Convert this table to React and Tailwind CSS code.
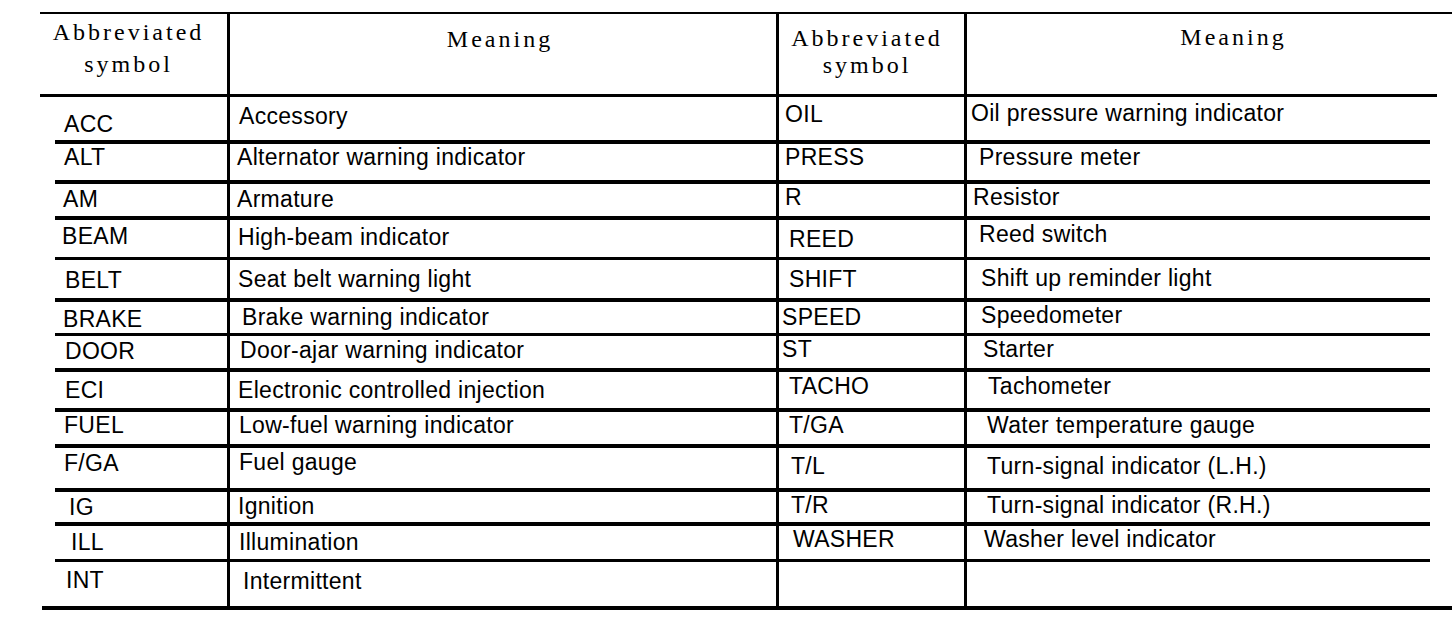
import React from "react";

// abbreviation table, two pairs of columns side by side
const rows = [
  { h: "h-[47px]", bar: "h-[4px]", cells: [["ACC", "pl-[24px] pt-[14px]"], ["Accessory", "pl-[9px] pt-[6px]"], ["OIL", "pl-[6px] pt-[4px]"], ["Oil pressure warning indicator", "pl-[4px] pt-[3px]"]] },
  { h: "h-[40px]", bar: "h-[4px]", cells: [["ALT", "pl-[24px] pt-[0px]"], ["Alternator warning indicator", "pl-[7px] pt-[0px]"], ["PRESS", "pl-[6px] pt-[0px]"], ["Pressure meter", "pl-[12px] pt-[0px]"]] },
  { h: "h-[36px]", bar: "h-[4px]", cells: [["AM", "pl-[23px] pt-[2px]"], ["Armature", "pl-[7px] pt-[2px]"], ["R", "pl-[6px] pt-[0px]"], ["Resistor", "pl-[6px] pt-[0px]"]] },
  { h: "h-[40px]", bar: "h-[3px]", cells: [["BEAM", "pl-[22px] pt-[3px]"], ["High-beam indicator", "pl-[8px] pt-[4px]"], ["REED", "pl-[10px] pt-[6px]"], ["Reed switch", "pl-[12px] pt-[1px]"]] },
  { h: "h-[42px]", bar: "h-[4px]", cells: [["BELT", "pl-[25px] pt-[7px]"], ["Seat belt warning light", "pl-[8px] pt-[6px]"], ["SHIFT", "pl-[10px] pt-[6px]"], ["Shift up reminder light", "pl-[14px] pt-[5px]"]] },
  { h: "h-[34px]", bar: "h-[3px]", cells: [["BRAKE", "pl-[23px] pt-[4px]"], ["Brake warning indicator", "pl-[12px] pt-[2px]"], ["SPEED", "pl-[3px] pt-[2px]"], ["Speedometer", "pl-[14px] pt-[0px]"]] },
  { h: "h-[36px]", bar: "h-[4px]", cells: [["DOOR", "pl-[25px] pt-[2px]"], ["Door-ajar warning indicator", "pl-[10px] pt-[1px]"], ["ST", "pl-[3px] pt-[0px]"], ["Starter", "pl-[16px] pt-[0px]"]] },
  { h: "h-[40px]", bar: "h-[4px]", cells: [["ECI", "pl-[25px] pt-[5px]"], ["Electronic controlled injection", "pl-[8px] pt-[5px]"], ["TACHO", "pl-[10px] pt-[1px]"], ["Tachometer", "pl-[21px] pt-[1px]"]] },
  { h: "h-[36px]", bar: "h-[4px]", cells: [["FUEL", "pl-[24px] pt-[0px]"], ["Low-fuel warning indicator", "pl-[9px] pt-[0px]"], ["T/GA", "pl-[10px] pt-[0px]"], ["Water temperature gauge", "pl-[20px] pt-[0px]"]] },
  { h: "h-[44px]", bar: "h-[4px]", cells: [["F/GA", "pl-[24px] pt-[2px]"], ["Fuel gauge", "pl-[9px] pt-[1px]"], ["T/L", "pl-[12px] pt-[5px]"], ["Turn-signal indicator (L.H.)", "pl-[20px] pt-[5px]"]] },
  { h: "h-[34px]", bar: "h-[4px]", cells: [["IG", "pl-[29px] pt-[2px]"], ["Ignition", "pl-[8px] pt-[1px]"], ["T/R", "pl-[12px] pt-[0px]"], ["Turn-signal indicator (R.H.)", "pl-[20px] pt-[0px]"]] },
  { h: "h-[36px]", bar: "h-[3px]", cells: [["ILL", "pl-[31px] pt-[3px]"], ["Illumination", "pl-[9px] pt-[3px]"], ["WASHER", "pl-[14px] pt-[0px]"], ["Washer level indicator", "pl-[17px] pt-[0px]"]] },
  { h: "h-[48px]", bar: "h-[4px]", cells: [["INT", "pl-[26px] pt-[5px]"], ["Intermittent", "pl-[13px] pt-[6px]"], ["", ""], ["", ""]] },
];

const bodyEdges = ["ml-[15px]", "", "", "mr-[22px]"];
const lastEdges = ["ml-[2px]", "", "", ""];

function HeaderRow() {
  const cells = [
    ["pt-[2px] pr-[10px] leading-[32px]", <>Abbreviated<br />symbol</>],
    ["pt-[11px] pr-[6px] leading-[28px]", "Meaning"],
    ["pt-[11px] pr-[9px] leading-[27px]", <>Abbreviated<br />symbol</>],
    ["pt-[9px] pl-[48px] leading-[28px]", "Meaning"],
  ];
  const edges = ["", "", "", "mr-[15px]"];
  return (
    <div className="grid grid-cols-[187px_549px_188px_488px] h-[83px]">
      {cells.map(([cls, text], i) => (
        <div key={i} className={i > 0 ? "flex flex-col border-l-[3px] border-black" : "flex flex-col"}>
          <div className={`flex-1 text-center font-['Liberation_Serif',serif] text-[24px] tracking-[3px] ${cls}`}>{text}</div>
          <div className={`h-[3px] bg-black ${edges[i]}`} />
        </div>
      ))}
    </div>
  );
}

function Row({ row, last }) {
  const edges = last ? lastEdges : bodyEdges;
  return (
    <div className={`grid grid-cols-[187px_549px_188px_488px] ${row.h}`}>
      {row.cells.map(([text, cls], i) => (
        <div key={i} className={i > 0 ? "flex flex-col border-l-[3px] border-black" : "flex flex-col"}>
          <div className={`flex-1 whitespace-nowrap text-[23px] leading-[26px] tracking-[0.3px] ${cls}`}>{text}</div>
          <div className={`${row.bar} bg-black ${edges[i]}`} />
        </div>
      ))}
    </div>
  );
}

export default function App() {
  return (
    <div className="min-h-screen bg-white pl-[40px] pt-[12px] text-black font-['Liberation_Sans',Arial,sans-serif]">
      <div className="w-[1412px]">
        <div className="h-[2px] bg-black" />
        <HeaderRow />
        {rows.map((row, i) => (
          <Row key={i} row={row} last={i === rows.length - 1} />
        ))}
      </div>
    </div>
  );
}
